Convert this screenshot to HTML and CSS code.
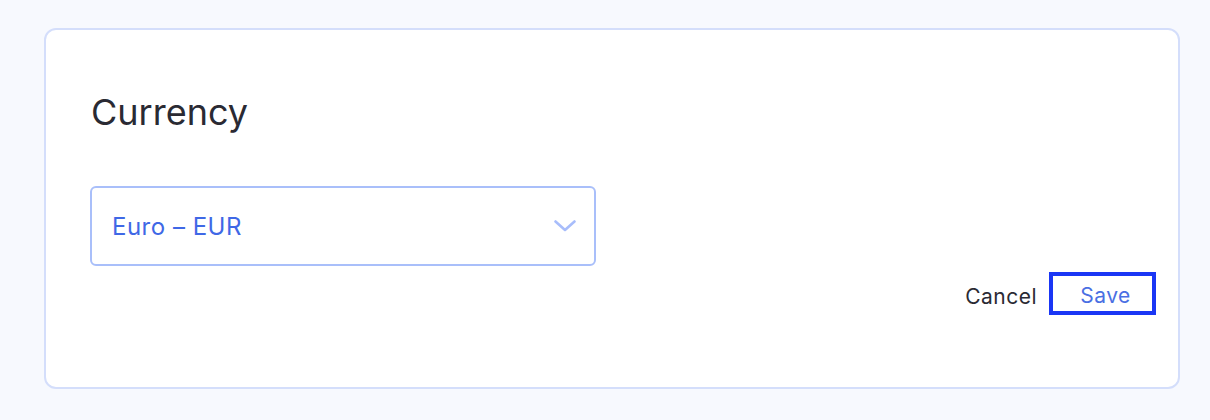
FILE: index.html
```html
<!DOCTYPE html>
<html lang="en">
<head>
<meta charset="utf-8">
<title>Currency</title>
<link rel="stylesheet" href="styles.css">
</head>
<body>
<div class="page">
  <section class="card">
    <h2 class="title">Currency</h2>
    <div class="select">
      <span class="select-value">Euro – EUR</span>
      <svg class="chevron" width="22" height="12" viewBox="0 0 22 12" aria-hidden="true">
        <path d="M1.5 1.5 L11 10 L20.5 1.5" fill="none" stroke="#a8bdfb" stroke-width="2.6" stroke-linecap="round" stroke-linejoin="round"/>
      </svg>
    </div>
    <div class="actions">
      <button class="btn btn-cancel" type="button">Cancel</button>
      <button class="btn btn-save" type="button">Save</button>
    </div>
  </section>
</div>
</body>
</html>
```

FILE: styles.css
```css
* { box-sizing: border-box; }
html, body {
  margin: 0;
  padding: 0;
  background: #f7f9fe;
  font-family: Inter, "Noto Sans", sans-serif;
}
.page {
  padding: 28px 30px 31px 44px;
}
.card {
  width: 1136px;
  height: 361px;
  background: #ffffff;
  border: 2px solid #d4defb;
  border-radius: 12px;
  padding: 60px 22px 0 44px;
  display: flex;
  flex-direction: column;
}
.title {
  margin: 0 0 0 1px;
  font-size: 36px;
  font-weight: 400;
  line-height: 44px;
  color: #2a2a33;
}
.select {
  margin-top: 52px;
  width: 506px;
  height: 80px;
  border: 2px solid #a9bffa;
  border-radius: 6px;
  display: flex;
  align-items: center;
  justify-content: space-between;
  padding: 0 18px 0 20px;
}
.select-value {
  font-size: 24px;
  letter-spacing: 0.5px;
  color: #3f68e6;
}
.chevron { display: block; }
.actions {
  margin-top: 6px;
  display: flex;
  justify-content: flex-end;
  align-items: center;
  gap: 12px;
}
.btn {
  font-family: Inter, "Noto Sans", sans-serif;
  font-size: 21px;
  letter-spacing: 0.5px;
  background: none;
  border: none;
  padding: 0;
  cursor: pointer;
}
.btn-cancel {
  color: #2a2a33;
  padding-top: 6px;
}
.btn-save {
  width: 107px;
  height: 43px;
  border: 4px solid #1a36f5;
  color: #4a6fe3;
  padding: 4px 0 0 6px;
}
```
